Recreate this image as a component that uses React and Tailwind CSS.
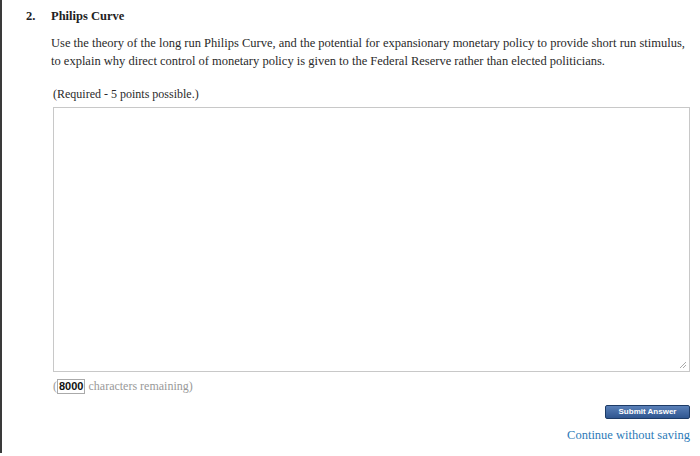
export default function App() {
  const serif = { fontFamily: '"Liberation Serif", "Times New Roman", serif' };
  return (
    <div className="w-[700px] h-[456px] bg-white overflow-hidden flex">
      <div className="w-[2px] h-[453px] bg-[#3a3a3a] shrink-0" />
      <div className="flex-1 pl-[24px] pr-[10px] pt-[9px] text-[#333]" style={serif}>
        <div className="flex items-baseline text-[12.5px] font-bold text-[#222] leading-[14px]">
          <span className="w-[25px]">2.</span>
          <span>Philips Curve</span>
        </div>
        <div className="pl-[25px] mt-[11px] text-[12.5px] leading-[18px] text-[#2a2a2a] whitespace-nowrap">
          <p>Use the theory of the long run Philips Curve, and the potential for expansionary monetary policy to provide short run stimulus,</p>
          <p>to explain why direct control of monetary policy is given to the Federal Reserve rather than elected politicians.</p>
        </div>
        <div className="pl-[27px] mt-[15px] text-[12px] leading-[18px] text-[#2a2a2a]">
          (Required - 5 points possible.)
        </div>
        <div className="ml-[27px] mt-[4px] w-[637px] h-[265px] border border-[#c8c8c8] relative bg-white">
          <svg className="absolute right-[2px] bottom-[2px]" width="8" height="8" viewBox="0 0 8 8">
            <line x1="1" y1="7" x2="7" y2="1" stroke="#aaa" strokeWidth="1" />
            <line x1="4" y1="7" x2="7" y2="4" stroke="#aaa" strokeWidth="1" />
          </svg>
        </div>
        <div className="ml-[27px] mt-[5px] flex items-center text-[12px] leading-[18px] text-[#999]">
          <span>(</span>
          <span
            className="border border-[#aaa] px-[1px] text-[11px] leading-[13px] font-bold text-[#111]"
            style={{ fontFamily: '"Liberation Sans", Arial, sans-serif' }}
          >
            8000
          </span>
          <span className="ml-[3px]">characters remaining)</span>
        </div>
        <div className="flex flex-col items-end mt-[10px]">
          <button
            className="w-[85px] h-[14px] rounded-[2px] border border-[#1d3b66] bg-gradient-to-b from-[#5a80b8] to-[#2f5690] text-white text-[8px] font-bold leading-[12px]"
            style={{ fontFamily: '"Liberation Sans", Arial, sans-serif' }}
          >
            Submit Answer
          </button>
          <div className="mt-[9px] text-[12.5px] leading-[14px] text-[#2d7ab8]">
            Continue without saving
          </div>
        </div>
      </div>
    </div>
  );
}
